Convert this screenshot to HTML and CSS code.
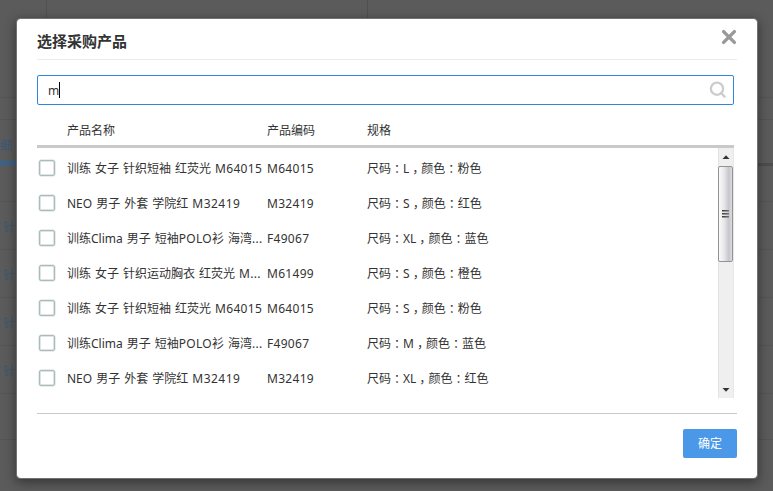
FILE: index.html
```html
<!DOCTYPE html>
<html lang="zh-CN">
<head>
<meta charset="utf-8">
<title>选择采购产品</title>
<link rel="stylesheet" href="styles.css">
</head>
<body>
<main class="page">
  <div class="page-top"><div class="cell cell-a"></div><div class="cell cell-b"></div></div>
  <div class="page-gap"></div>
  <div class="tabs"><span class="tab">细</span></div>
  <div class="line head"></div>
  <div class="line">针</div>
  <div class="line">针</div>
  <div class="line">针</div>
  <div class="line">针</div>
  <div class="line last"></div>
</main>
<section class="dialog">
  <header class="dialog-head">
    <h1>选择采购产品</h1>
    <svg class="close" width="16" height="16" viewBox="0 0 16 16"><path d="M2.6 2.6L13.4 13.4M13.4 2.6L2.6 13.4"/></svg>
  </header>
  <div class="search">
    <span class="query">m</span><span class="caret"></span>
    <svg class="glass" width="18" height="18" viewBox="0 0 18 18"><circle cx="8" cy="7.7" r="6.1"/><path d="M12 12L15.6 15.6"/></svg>
  </div>
  <div class="row thead"><span></span><span>产品名称</span><span>产品编码</span><span>规格</span></div>
  <div class="list">
    <div class="rows">
      <div class="row"><i class="check"></i><span>训练 女子 针织短袖 红荧光 <span class="code">M64015</span></span><span class="code">M64015</span><span>尺码<b lang="zh-TW">：</b>L<b class="comma" lang="zh-TW">，</b>颜色<b lang="zh-TW">：</b>粉色</span></div>
      <div class="row"><i class="check"></i><span>NEO 男子 外套 学院红 <span class="code wide">M32419</span></span><span class="code">M32419</span><span>尺码<b lang="zh-TW">：</b>S<b class="comma" lang="zh-TW">，</b>颜色<b lang="zh-TW">：</b>红色</span></div>
      <div class="row"><i class="check"></i><span>训练Clima 男子 短袖<span class="code">POLO</span>衫 海湾<span class="code">...</span></span><span class="code">F49067</span><span>尺码<b lang="zh-TW">：</b>XL<b class="comma" lang="zh-TW">，</b>颜色<b lang="zh-TW">：</b>蓝色</span></div>
      <div class="row"><i class="check"></i><span>训练 女子 针织运动胸衣 红荧光 <span class="code">M...</span></span><span class="code">M61499</span><span>尺码<b lang="zh-TW">：</b>S<b class="comma" lang="zh-TW">，</b>颜色<b lang="zh-TW">：</b>橙色</span></div>
      <div class="row"><i class="check"></i><span>训练 女子 针织短袖 红荧光 <span class="code">M64015</span></span><span class="code">M64015</span><span>尺码<b lang="zh-TW">：</b>S<b class="comma" lang="zh-TW">，</b>颜色<b lang="zh-TW">：</b>粉色</span></div>
      <div class="row"><i class="check"></i><span>训练Clima 男子 短袖<span class="code">POLO</span>衫 海湾<span class="code">...</span></span><span class="code">F49067</span><span>尺码<b lang="zh-TW">：</b>M<b class="comma" lang="zh-TW">，</b>颜色<b lang="zh-TW">：</b>蓝色</span></div>
      <div class="row"><i class="check"></i><span>NEO 男子 外套 学院红 <span class="code wide">M32419</span></span><span class="code">M32419</span><span>尺码<b lang="zh-TW">：</b>XL<b class="comma" lang="zh-TW">，</b>颜色<b lang="zh-TW">：</b>红色</span></div>
    </div>
    <div class="scrollbar">
      <svg class="arrow" width="16" height="18" viewBox="0 0 16 18"><path d="M4.5 11L8 7.2L11.5 11Z"/></svg>
      <div class="thumb"><i></i><i></i><i></i></div>
      <svg class="arrow down" width="16" height="18" viewBox="0 0 16 18"><path d="M4.5 8L8 11.8L11.5 8Z"/></svg>
    </div>
  </div>
  <footer class="dialog-foot"><button class="ok">确定</button></footer>
</section>
</body>
</html>
```
FILE: styles.css
```css
* { box-sizing: border-box; }
body {
  margin: 0;
  width: 773px;
  height: 491px;
  overflow: hidden;
  background: #5b5b5b;
  color: #333;
  font: 12px/18px "Noto Sans", "Noto Sans CJK SC", sans-serif;
}

/* dimmed page behind the dialog */
.page { height: 491px; color: #3b5875; }
.page-top { display: flex; height: 98px; border-bottom: 1px solid #555; }
.cell { border-right: 1px solid #505050; }
.cell-a { width: 47px; }
.cell-b { width: 321px; }
.page-gap { height: 22px; border-bottom: 1px solid #555; }
.tabs { display: flex; height: 46px; border-bottom: 3px solid #4d4d4d; }
.tab {
  width: 100px;
  height: 46px;
  padding-top: 17px;
  border-bottom: 6px solid #43607e;
}
.line { height: 48px; padding-left: 3px; border-bottom: 1px solid #555; line-height: 52px; }
.line.head { height: 36px; }
.line.last { height: 46px; }

.dialog {
  position: absolute;
  left: 16px;
  top: 18px;
  width: 742px;
  height: 461px;
  padding: 0 20px;
  background: #fff;
  background-clip: padding-box;
  border: 1px solid #727272;
  border-radius: 4px;
  box-shadow: 0 3px 12px rgba(0, 0, 0, .45);
}
.dialog-head {
  display: flex;
  justify-content: space-between;
  height: 41px;
  border-bottom: 1px solid #ebebeb;
}
h1 { margin: 11px 0 0; font-size: 15px; line-height: 22px; font-weight: 700; }
.close { margin-top: 10px; fill: none; stroke: #999; stroke-width: 3.4; stroke-linecap: round; }
.search {
  display: flex;
  align-items: center;
  width: 697px;
  height: 30px;
  margin-top: 15px;
  padding: 0 6px 0 10px;
  border: 1px solid #2f87dc;
  border-radius: 2px;
}
.query { padding-top: 2px; }
.caret { width: 1px; height: 16px; background: #000; }
.glass { margin-left: auto; fill: none; stroke: #ccc; stroke-width: 2.3; stroke-linecap: round; }
.row {
  display: grid;
  grid-template-columns: 30px 200px 100px 1fr;
  align-items: center;
  height: 35px;
  white-space: nowrap;
  word-spacing: .9px;
}
.row b { font-weight: 400; font-family: "Noto Sans CJK TC", sans-serif; line-height: 1; vertical-align: -1px; }
.row .comma { line-height: 0; vertical-align: -4px; }
.code { letter-spacing: .3px; }
.wide { letter-spacing: .5px; }
.thead { width: 697px; height: 43px; padding-top: 12px; border-bottom: 3px solid #c9c9c9; }
.list { display: flex; width: 697px; height: 250px; }
.rows { flex: 1; padding-top: 3px; }
.check { width: 16px; height: 16px; margin: 0 0 1px 2px; border: 1px solid #abbaba; border-radius: 2px; box-shadow: 0 0 0 .5px #d3dcdc, inset 0 0 0 .5px #bfcaca; }
.scrollbar {
  display: flex;
  flex-direction: column;
  width: 16px;
  background: #efefef;
  border-left: 1px solid #e3e3e3;
  border-right: 1px solid #e8e8e8;
}
.arrow { margin-left: -1px; flex: none; fill: #333; }
.arrow.down { margin-top: auto; }
.thumb {
  display: flex;
  flex-direction: column;
  align-items: center;
  justify-content: center;
  gap: 1px;
  width: 15px;
  margin-left: -1px;
  height: 96px;
  border: 1px solid #929295;
  border-radius: 2px;
  background: linear-gradient(90deg, #fafafa, #e7e7e9 40%, #c6c7cb 75%, #dddde0);
}
.thumb i { width: 7px; height: 2px; background: linear-gradient(90deg, #333, #777); border-bottom: 1px solid #999; }
.dialog-foot { display: flex; justify-content: flex-end; height: 46px; margin-top: 15px; padding-top: 15px; border-top: 1px solid #c9c9c9; }
.ok {
  width: 54px;
  height: 29px;
  padding: 0;
  border: 0;
  border-radius: 2px;
  background: #4b98e8;
  color: #fff;
  font: inherit;
}
```
